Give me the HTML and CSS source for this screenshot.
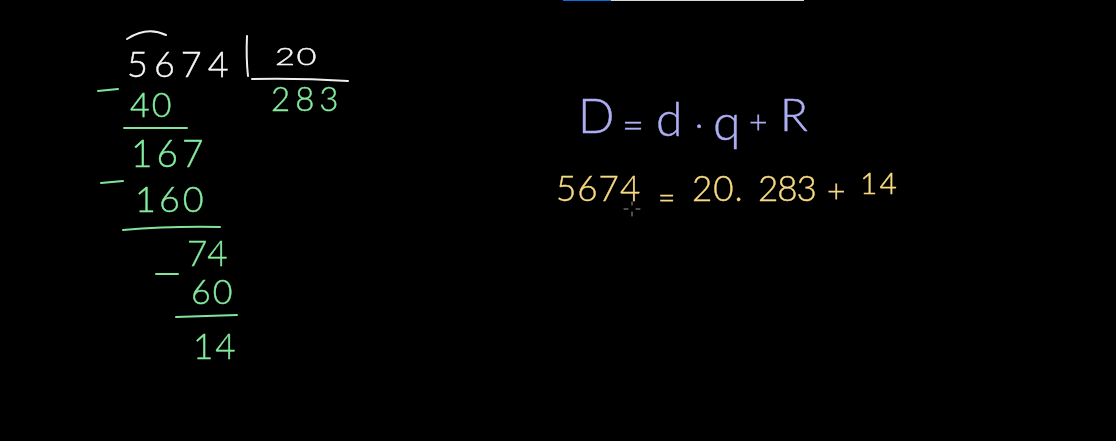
FILE: index.html
```html
<!DOCTYPE html>
<html lang="en">
<head>
    <meta charset="UTF-8">
    <title>Division check</title>
    <link rel="stylesheet" href="styles.css">
</head>
<body>
    <div class="progress">
        <div class="progress-done"></div>
    </div>
    <div class="board">
        <svg class="strokes" width="1116" height="441" viewBox="0 0 1116 441" fill="none" stroke-linecap="round">
            <g stroke="#efefef" stroke-width="2">
                <path d="M127 39 Q147 26 166 35"/>
                <path d="M247 36 Q246 58 248 76"/>
                <path d="M252 79 Q300 78 348 81"/>
            </g>
            <g stroke="#7fe59a" stroke-width="2">
                <path d="M98 91 L118 89"/>
                <path d="M124 128 L187 128"/>
                <path d="M101 183 L123 181"/>
                <path d="M123 230 Q170 226 220 227"/>
                <path d="M156 274 L178 274"/>
                <path d="M176 317 L237 315"/>
            </g>
            <!-- cursor -->
            <g stroke="#9a9a9a" stroke-width="1">
                <path d="M632 202 V205 M632 212 V216 M624 209 H628 M636 209 H640"/>
            </g>
        </svg>

        <!-- long division -->
        <span class="num white n-dividend">5674</span>
        <span class="num white n-divisor">20</span>
        <span class="num green n-quotient">283</span>
        <span class="num green n-40">40</span>
        <span class="num green n-167">167</span>
        <span class="num green n-160">160</span>
        <span class="num green n-74">74</span>
        <span class="num green n-60">60</span>
        <span class="num green n-14">14</span>

        <!-- formula -->
        <span class="num violet f-big">D</span>
        <span class="num violet f-eq">=</span>
        <span class="num violet f-d">d</span>
        <span class="num violet f-dot">·</span>
        <span class="num violet f-q">q</span>
        <span class="num violet f-plus">+</span>
        <span class="num violet f-r">R</span>

        <!-- worked example -->
        <span class="num yellow y-5674">5674</span>
        <span class="num yellow y-eq">=</span>
        <span class="num yellow y-20">20.</span>
        <span class="num yellow y-283">283</span>
        <span class="num yellow y-plus">+</span>
        <span class="num yellow y-14">14</span>
    </div>
</body>
</html>
```

FILE: styles.css
```css
* {
    box-sizing: border-box;
}
html, body {
    margin: 0;
    padding: 0;
    background-color: #000;
    overflow: hidden;
}
.progress {
    position: absolute;
    top: 0;
    left: 563px;
    width: 241px;
    height: 1px;
    background-color: #d8d8d8;
    z-index: 2;
}
.progress-done {
    width: 48px;
    height: 100%;
    background-color: #0a6fd8;
}
.board {
    position: relative;
    width: 1116px;
    height: 441px;
    background-color: #000;
    font-family: Lato, "Open Sans", sans-serif;
    font-weight: 300;
    filter: blur(0.4px);
}
.strokes {
    position: absolute;
    top: 0;
    left: 0;
}
.num {
    position: absolute;
    line-height: 1;
    white-space: nowrap;
    -webkit-text-stroke: 0.4px currentColor;
}
.white {
    color: #f6f6f6;
}
.green {
    color: #84ec9f;
}
.violet {
    color: #aeaef4;
}
.yellow {
    color: #f8da80;
}

/* long division */
.n-dividend {
    left: 127px;
    top: 45px;
    font-size: 36px;
    letter-spacing: 6px;
}
.n-divisor {
    left: 275px;
    top: 45px;
    font-size: 23px;
    letter-spacing: 1px;
    transform: scaleX(1.5);
    transform-origin: left center;
}
.n-quotient {
    left: 271px;
    top: 82px;
    font-size: 33px;
    letter-spacing: 5px;
}
.n-40 {
    left: 130px;
    top: 87px;
    font-size: 34px;
    letter-spacing: 2px;
}
.n-167 {
    left: 131px;
    top: 134px;
    font-size: 37px;
    letter-spacing: 4px;
}
.n-160 {
    left: 135px;
    top: 180px;
    font-size: 36px;
    letter-spacing: 3px;
}
.n-74 {
    left: 187px;
    top: 235px;
    font-size: 35px;
    letter-spacing: 0;
}
.n-60 {
    left: 191px;
    top: 274px;
    font-size: 34px;
    letter-spacing: 2px;
}
.n-14 {
    left: 193px;
    top: 328px;
    font-size: 35px;
    letter-spacing: 2px;
}

/* formula */
.f-big {
    left: 578px;
    top: 91px;
    font-size: 48px;
}
.f-eq {
    left: 622px;
    top: 104px;
    font-size: 38px;
}
.f-d {
    left: 656px;
    top: 94px;
    font-size: 48px;
}
.f-dot {
    left: 695px;
    top: 106px;
    font-size: 34px;
}
.f-q {
    left: 713px;
    top: 96px;
    font-size: 50px;
}
.f-plus {
    left: 749px;
    top: 105px;
    font-size: 32px;
}
.f-r {
    left: 780px;
    top: 91px;
    font-size: 46px;
}

/* worked example */
.y-5674 {
    left: 556px;
    top: 170px;
    font-size: 35px;
    letter-spacing: 1px;
}
.y-eq {
    left: 658px;
    top: 181px;
    font-size: 30px;
}
.y-20 {
    left: 692px;
    top: 170px;
    font-size: 35px;
    letter-spacing: 1px;
}
.y-283 {
    left: 758px;
    top: 170px;
    font-size: 35px;
    letter-spacing: -1px;
}
.y-plus {
    left: 827px;
    top: 174px;
    font-size: 32px;
}
.y-14 {
    left: 860px;
    top: 167px;
    font-size: 30px;
    letter-spacing: 2px;
}
```
